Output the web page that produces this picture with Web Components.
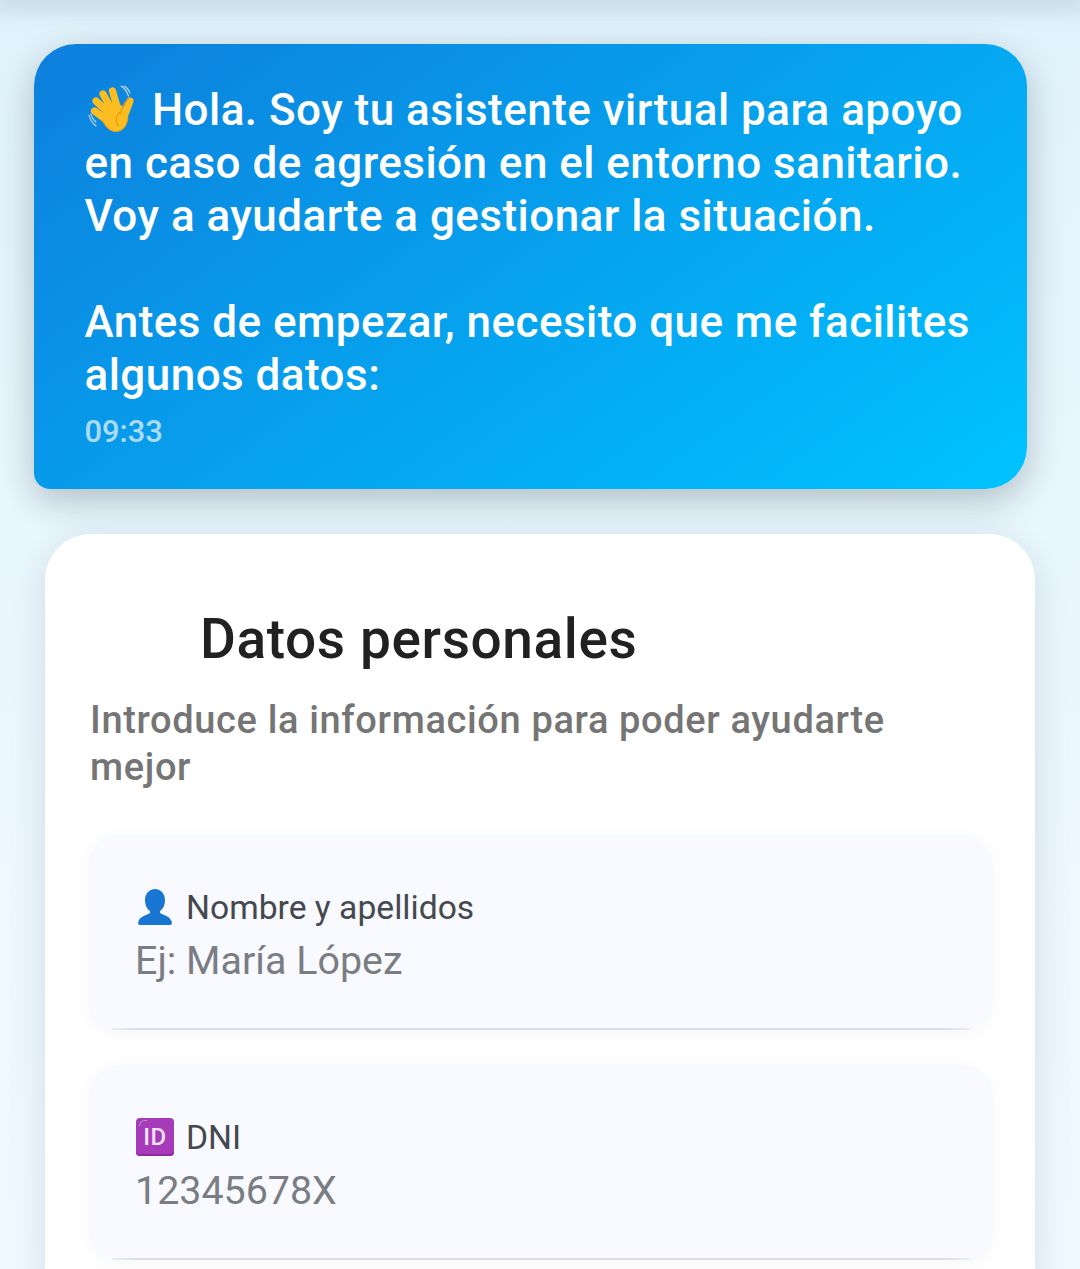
<!DOCTYPE html>
<html lang="es"><head><meta charset="utf-8"><title>Asistente</title>
<style>
html,body{margin:0;padding:0;height:1269px;overflow:hidden}
body{background:linear-gradient(180deg,#e0f2fb 0,#e9f7fe 500px,#f0f9ff 1269px);font-family:Roboto,"Noto Sans",sans-serif}
</style></head><body>
<chat-page>
  <chat-bubble time="09:33"><wave-icon></wave-icon> Hola. Soy tu asistente virtual para apoyo en caso de agresión en el entorno sanitario. Voy a ayudarte a gestionar la situación.<br><br>Antes de empezar, necesito que me facilites algunos datos:</chat-bubble>
  <form-card heading="Datos personales" sub="Introduce la información para poder ayudarte mejor">
    <form-field label="Nombre y apellidos" value="Ej: María López"><person-icon slot="icon"></person-icon></form-field>
    <form-field label="DNI" value="12345678X"><id-icon slot="icon"></id-icon></form-field>
  </form-card>
</chat-page>
<script>
function def(name,html){customElements.define(name,class extends HTMLElement{constructor(){super();this.attachShadow({mode:'open'}).innerHTML=html;}});}
def('chat-page',`<style>:host{display:block;position:relative;height:1269px;overflow:hidden}
.top{height:0;box-shadow:0 0 22px 6px rgba(60,80,90,.28)}
.wrap{display:flex;flex-direction:column;padding-top:44px}</style><div class="top"></div><div class="wrap"><slot></slot></div>`);
customElements.define('chat-bubble',class extends HTMLElement{constructor(){super();this.attachShadow({mode:'open'}).innerHTML=`<style>
:host{display:block;box-sizing:border-box;margin-left:34px;width:993px;height:445px;padding:40px 51px 0 50.500px;border-radius:42px 42px 42px 16px;background:linear-gradient(145deg,#0d7fdc 0%,#00c3ff 100%);box-shadow:0 12px 36px rgba(30,40,45,.27);color:#fff;font-family:Roboto,sans-serif;font-weight:500;font-size:44px;letter-spacing:.46px;line-height:53px}
.t{font-size:30.800px;font-weight:500;letter-spacing:0;line-height:40px;color:rgba(255,255,255,.68);margin-top:10px}
</style><div><slot></slot></div><div class="t"></div>`;}
connectedCallback(){this.shadowRoot.querySelector('.t').textContent=this.getAttribute('time');}});
customElements.define('form-card',class extends HTMLElement{constructor(){super();this.attachShadow({mode:'open'}).innerHTML=`<style>
:host{display:block;box-sizing:border-box;margin:45px 0 0 45px;width:990px;padding:72px 43px 0 45px;height:760px;border-radius:46px 46px 0 0;background:#fff;box-shadow:0 8px 38px rgba(30,40,45,.13);font-family:Roboto,sans-serif}
h2{margin:0 0 0 110px;font-size:55px;letter-spacing:.6px;font-weight:500;line-height:66px;color:#212121}
p{margin:25px 0 44px;max-width:860px;font-size:38px;letter-spacing:.64px;font-weight:500;line-height:47px;color:#757575}
.f{display:flex;flex-direction:column;gap:35px}
</style><h2></h2><p></p><div class="f"><slot></slot></div>`;}
connectedCallback(){this.shadowRoot.querySelector('h2').textContent=this.getAttribute('heading');this.shadowRoot.querySelector('p').textContent=this.getAttribute('sub');}});
customElements.define('form-field',class extends HTMLElement{constructor(){super();this.attachShadow({mode:'open'}).innerHTML=`<style>
:host{display:block;position:relative;box-sizing:border-box;height:195px;padding:52px 46px 0 45px;border-radius:28px;background:#f8faff;box-shadow:0 3px 16px rgba(70,70,100,.05);font-family:Roboto,sans-serif}
:host::after{content:"";position:absolute;left:22px;right:22px;bottom:0;height:2px;background:linear-gradient(90deg,#eceef3,#dadde6 3%,#dadde6 97%,#eceef3)}
.l{display:flex;align-items:center;gap:13px;height:40px;font-size:33.650px;color:#45494e}
.v{margin-top:8px;font-size:39.400px;line-height:52px;color:#7a7d82}
</style><div class="l"><slot name="icon"></slot><span class="a"></span></div><div class="v"></div>`;}
connectedCallback(){this.shadowRoot.querySelector('.a').textContent=this.getAttribute('label');this.shadowRoot.querySelector('.v').textContent=this.getAttribute('value');}});
def('wave-icon',`<style>:host{display:inline-block;width:50px;height:50px;vertical-align:-10px;margin-right:6px}svg{display:block;width:100%;height:100%}</style>
<svg viewBox="0 0 50 50" fill="none">
<path d="M36 1q5 3 7.500 10M39 1q4 2 6 7M4 30q1 6 7 11M6 29q1 5 5 8" stroke="#cfe0f0" stroke-width="1.100" stroke-linecap="round"/>
<g stroke="#fbbd20" stroke-width="7.200" stroke-linecap="round"><path d="M27.500 6 33 25M18 9 28 27M11 16 25 29M9.500 26 23 36"/><path d="M45 16 39 32"/></g>
<path d="M22 25 36 20 42 24 43 32C42 41 37 47 30 46.500 24 46 20 41 17 34Z" fill="#fbbd20"/>
<path d="M44 13c-5 5-8 10-8 16M35 27c-4 3-5 9-2 14" stroke="#e39a10" stroke-width="1.100" stroke-linecap="round"/>
<path d="M17 35c3 6 7 11 13 11.500 7 .5 12-5 13-14" stroke="#e8a015" stroke-width="1"/></svg>`);
def('person-icon',`<style>:host{display:block;width:38px;height:38px}svg{display:block;width:100%;height:100%}</style>
<svg viewBox="0 0 38 38"><path d="M20 1c6 0 10 5 10 11 0 5-2 9-5 11v2c3 2 11 3 12 10 0 1-1 2-2 2H5c-1 0-2-1-2-2 1-7 9-8 12-10v-2c-3-2-5-6-5-11C10 6 14 1 20 1z" fill="#1976d2"/></svg>`);
def('id-icon',`<style>:host{display:block;width:38px;height:38px;margin-left:1px;margin-right:-1px}.b{position:relative;box-sizing:border-box;width:38px;height:38px;border-radius:4px;background:#a53bb9;box-shadow:inset 0 -2px 0 #8e2ba3;color:#f1e2f5;font:500 24px/39px Roboto,sans-serif;letter-spacing:.5px;text-align:center}.b::before{content:"";position:absolute;left:3px;top:2px;width:8px;height:6px;border-left:1.500px solid #c987d6;border-top:1.500px solid #c987d6;border-top-left-radius:6px;box-sizing:border-box}</style><div class="b">ID</div>`);
</script>
</body></html>
